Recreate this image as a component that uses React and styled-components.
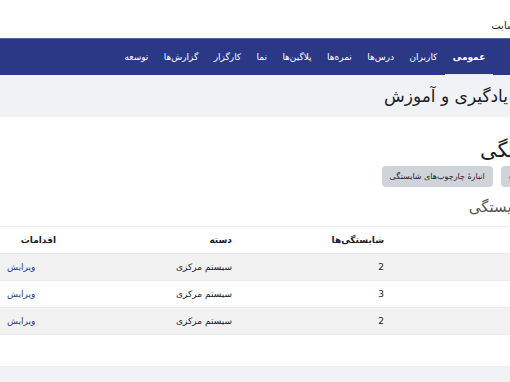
import React from "react";
import styled, { createGlobalStyle } from "styled-components";

const GlobalStyle = createGlobalStyle`
  html, body {
    margin: 0;
    padding: 0;
    background: #fff;
    overflow: hidden;
  }
  body {
    font-family: "DejaVu Sans", "Noto Sans", sans-serif;
    color: #1d2125;
  }
`;

const tabs = [
  "عمومی",
  "کاربران",
  "درس‌ها",
  "نمره‌ها",
  "پلاگین‌ها",
  "نما",
  "کارگزار",
  "گزارش‌ها",
  "توسعه",
];

const rows = [
  { name: "چارچوب الف", count: 2, cat: "سیستم مرکزی" },
  { name: "چارچوب ب", count: 3, cat: "سیستم مرکزی" },
  { name: "چارچوب ج", count: 2, cat: "سیستم مرکزی" },
];

const App = () => {
  return (
    <>
      <GlobalStyle />
      <Page>
        <TopBar>
          <SiteTitle>مدیریت سایت</SiteTitle>
        </TopBar>
        <NavBar>
          {tabs.map((t, i) => (
            <NavItem key={t} active={i === 0}>
              {t}
            </NavItem>
          ))}
        </NavBar>
        <PageHeader>
          <PageTitle>یادگیری و آموزش</PageTitle>
        </PageHeader>
        <Main>
          <Heading>شایستگی</Heading>
          <ButtonRow>
            <GrayButton>تنظیمات</GrayButton>
            <GrayButton>انبارهٔ چارچوب‌های شایستگی</GrayButton>
          </ButtonRow>
          <SubHeading>چارچوب‌های شایستگی</SubHeading>
          <Table>
            <HeadRow>
              <Cell>نام</Cell>
              <Cell>شایستگی‌ها</Cell>
              <Cell>دسته</Cell>
              <Cell>اقدامات</Cell>
            </HeadRow>
            {rows.map((r, i) => (
              <BodyRow key={i} striped={i % 2 === 0}>
                <Cell>{r.name}</Cell>
                <Cell>{r.count}</Cell>
                <Cell>{r.cat}</Cell>
                <ActionCell>
                  <EditLink href="#">ویرایش</EditLink>
                </ActionCell>
              </BodyRow>
            ))}
          </Table>
        </Main>
        <Footer />
      </Page>
    </>
  );
};

export default App;

// the page is wider than the window; its right part runs past the frame
const Page = styled.div`
  direction: rtl;
  width: calc(100% + 200px);
  min-height: 382px;
  display: flex;
  flex-direction: column;
`;

const TopBar = styled.header`
  height: 38px;
  display: flex;
  align-items: center;
  padding: 12px 160px 0 0;
  box-sizing: border-box;
`;

const SiteTitle = styled.span`
  font-size: 10px;
  color: #1d2125;
`;

const NavBar = styled.nav`
  height: 37px;
  box-sizing: border-box;
  background: #2a3886;
  border-top: 1px solid #5563a8;
  display: flex;
  align-items: stretch;
  padding-right: 217px;
  box-shadow: 0 1px 2px rgba(0, 0, 0, 0.12);
`;

const NavItem = styled.a`
  display: flex;
  align-items: center;
  padding: 0 7.7px;
  font-size: 9px;
  font-weight: ${(p) => (p.active ? 700 : 400)};
  color: #fff;
  border-bottom: 2px solid ${(p) => (p.active ? "#e8e8ee" : "transparent")};
  margin-bottom: -1px;
`;

const PageHeader = styled.div`
  background: #f1f2f6;
  height: 42px;
  display: flex;
  align-items: center;
  padding-right: 202px;
`;

const PageTitle = styled.h1`
  margin: 0;
  font-size: 17px;
  font-weight: 400;
  color: #1d2125;
`;

const Main = styled.main`
  padding-top: 19px;
  flex: 1;
`;

const Heading = styled.h2`
  margin: 0 146px 0 0;
  font-size: 21px;
  font-weight: 400;
  line-height: 28px;
`;

const ButtonRow = styled.div`
  display: flex;
  gap: 8px;
  padding-right: 165px;
  margin-top: 2px;
`;

const GrayButton = styled.button`
  height: 21px;
  padding: 0 8px;
  border: none;
  border-radius: 4px;
  background: #ced4da;
  color: #1d2125;
  font-family: inherit;
  font-size: 8px;
`;

const SubHeading = styled.h3`
  margin: 10px 100px 0 0;
  font-size: 15px;
  font-weight: 400;
  color: #555;
  line-height: 20px;
`;

const Table = styled.div`
  margin-top: 9px;
  border-top: 1px solid #eceef1;
`;

const rowGrid = `
  display: grid;
  grid-template-columns: 320px 152px 176px 62px;
  align-items: center;
  height: 27px;
  border-bottom: 1px solid #e9ecef;
  box-sizing: border-box;
`;

const HeadRow = styled.div`
  ${rowGrid}
  font-size: 9px;
  font-weight: 700;
`;

const BodyRow = styled.div`
  ${rowGrid}
  font-size: 9px;
  background: ${(p) => (p.striped ? "#f2f2f2" : "#fff")};
`;

const Cell = styled.div`
  padding-right: 6px;
  white-space: nowrap;
`;

const ActionCell = styled.div`
  text-align: left;
  padding-left: 7px;
`;

const EditLink = styled.a`
  color: #2a3886;
  text-decoration: none;
`;

const Footer = styled.footer`
  height: 16px;
  background: #f1f2f6;
  margin-top: 31px;
`;
